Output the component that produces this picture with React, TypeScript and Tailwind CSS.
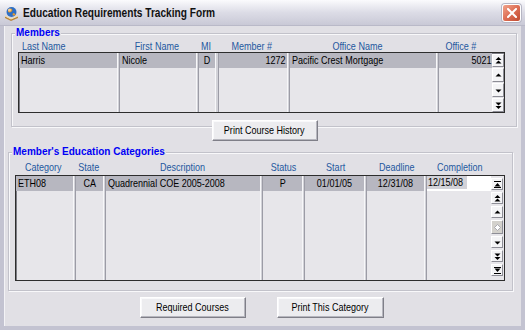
import React from 'react'

const sans = "font-['Liberation_Sans',Arial,sans-serif]"

type Align = 'left' | 'center' | 'right'
type Col = { label: string; w: number; value: string; align: Align; head?: 'left' | 'center'; sep?: number; flex?: boolean }

const memberCols: Col[] = [
  { label: 'Last Name', w: 98, value: 'Harris', align: 'left', head: 'left', sep: 3 },
  { label: 'First Name', w: 76, value: 'Nicole', align: 'left', sep: 3 },
  { label: 'MI', w: 16, value: 'D', align: 'center', sep: 4 },
  { label: 'Member #', w: 68, value: '1272', align: 'right', sep: 3 },
  { label: 'Office Name', w: 136, value: 'Pacific Crest Mortgage', align: 'left', sep: 3, flex: true },
]

const catCols: Col[] = [
  { label: 'Category', w: 57, value: 'ETH08', align: 'left', sep: 3 },
  { label: 'State', w: 27, value: 'CA', align: 'center', sep: 3 },
  { label: 'Description', w: 153, value: 'Quadrennial COE 2005-2008', align: 'left', sep: 3, flex: true },
  { label: 'Status', w: 39, value: 'P', align: 'center', sep: 3 },
  { label: 'Start', w: 59, value: '01/01/05', align: 'center', sep: 3 },
  { label: 'Deadline', w: 57, value: '12/31/08', align: 'center', sep: 3 },
]

// condensed text (the form uses a narrow face)
function Txt({ children, align = 'left' }: { children: React.ReactNode; align?: Align }) {
  const o = align === 'left' ? 'origin-left' : align === 'right' ? 'origin-right' : 'origin-center'
  return <span className={`inline-block whitespace-nowrap scale-x-[0.82] ${o}`}>{children}</span>
}

function Glyph({ kind }: { kind: string }) {
  return (
    <svg width="7" height="7" viewBox="0 0 7 7" className="block">
      {kind === 'top' && (<><rect x="0" y="0" width="7" height="1" fill="#000" /><path d="M0.5 5.5 L3.5 2 L6.5 5.5 Z" fill="#000" /><rect x="0" y="6" width="7" height="1" fill="#000" /></>)}
      {kind === 'dup' && (<><path d="M0.5 3 L3.5 0 L6.5 3 Z" fill="#000" /><path d="M0.5 6.5 L3.5 3.5 L6.5 6.5 Z" fill="#000" /></>)}
      {kind === 'up' && <path d="M0.5 4.5 L3.5 1.5 L6.5 4.5 Z" fill="#000" />}
      {kind === 'dn' && <path d="M0.5 2.5 L3.5 5.5 L6.5 2.5 Z" fill="#000" />}
      {kind === 'ddn' && (<><path d="M0.5 0.5 L3.5 3.5 L6.5 0.5 Z" fill="#000" /><path d="M0.5 4 L3.5 7 L6.5 4 Z" fill="#000" /></>)}
      {kind === 'bot' && (<><rect x="0" y="0" width="7" height="1" fill="#000" /><path d="M0.5 1.5 L3.5 5 L6.5 1.5 Z" fill="#000" /><rect x="0" y="6" width="7" height="1" fill="#000" /></>)}
      {kind === 'dia' && <path d="M3.5 0.5 L6.5 3.5 L3.5 6.5 L0.5 3.5 Z" fill="#fff" stroke="#9a9aa4" strokeWidth="0.8" />}
    </svg>
  )
}

function ScrollBtn({ kind, h }: { kind: string; h: number }) {
  const dis = kind === 'dia'
  return (
    <div
      className={`w-[12px] flex items-center justify-center border border-t-white border-l-white border-r-[#8d8d96] border-b-[#8d8d96] ${dis ? 'bg-[#d3d1cc]' : 'bg-[#f4f4f6]'}`}
      style={{ height: h }}
    >
      <Glyph kind={kind} />
    </div>
  )
}

function Sep({ w }: { w: number }) {
  return (
    <div className="flex shrink-0 self-stretch" style={{ width: w }}>
      <div className="w-px bg-[#f7f7f9]" />
      <div className="flex-1 bg-[#d2d2d8]" />
      <div className="w-px bg-[#9c9ca6]" />
    </div>
  )
}

function Cell({ c, rowH }: { c: Col; rowH: number }) {
  const al = c.align === 'left' ? 'justify-start pl-[2px]' : c.align === 'right' ? 'justify-end pr-[2px]' : 'justify-center'
  return (
    <div className={`${c.flex ? 'flex-1' : 'shrink-0'} flex flex-col`} style={c.flex ? undefined : { width: c.w }}>
      <div className={`flex items-center ${al} bg-[#b7b7c0] text-[11px] text-black`} style={{ height: rowH }}>
        <Txt align={c.align}>{c.value}</Txt>
      </div>
    </div>
  )
}

function Header({ cols, tail }: { cols: Col[]; tail: { label: string; w: number }[] }) {
  return (
    <div className={`flex h-[12px] items-center text-[11px] text-[#24589f] ${sans}`}>
      {cols.map((c, i) => (
        <React.Fragment key={i}>
          <div
            className={`${c.flex ? 'flex-1' : 'shrink-0'} flex leading-none ${c.head === 'left' ? 'justify-start pl-[4px]' : 'justify-center'}`}
            style={c.flex ? undefined : { width: c.w }}
          >
            <Txt align={c.head === 'left' ? 'left' : 'center'}>{c.label}</Txt>
          </div>
          <div className="shrink-0" style={{ width: c.sep }} />
        </React.Fragment>
      ))}
      {tail.map((t, i) => (
        <div key={i} className="shrink-0 flex justify-center leading-none" style={{ width: t.w }}>
          <Txt align="center">{t.label}</Txt>
        </div>
      ))}
    </div>
  )
}

function Button({ children, w }: { children: React.ReactNode; w: number }) {
  return (
    <div
      className={`h-[21px] flex items-center justify-center bg-[#ececef] border border-t-white border-l-white border-r-[#7f7f88] border-b-[#7f7f88] shadow-[inset_-1px_-1px_0_#b6b6be,inset_1px_1px_0_#f9f9fb] text-[11px] text-black ${sans}`}
      style={{ width: w }}
    >
      <Txt align="center">{children}</Txt>
    </div>
  )
}

function GroupBox({ label, children, className }: { label: string; children: React.ReactNode; className: string }) {
  return (
    <div className={`relative border border-[#c2c2ca] shadow-[inset_1px_1px_0_#f8f8fa,1px_1px_0_#f8f8fa] ${className}`}>
      <div className={`absolute -top-[8px] left-[3px] px-[1px] bg-[#e1e0e5] text-[10px] font-bold text-[#0000f5] leading-[14px] ${sans}`}>
        {label}
      </div>
      {children}
    </div>
  )
}

function Icon() {
  return (
    <svg width="15" height="15" viewBox="0 0 15 15">
      <path d="M1 10 L7 13 L14 10 L14 12 L7 15 L1 12 Z" fill="#b9853a" />
      <path d="M1 10 L7 13 L14 10" stroke="#f3e3b5" strokeWidth="1" fill="none" />
      <circle cx="7.5" cy="6" r="5" fill="#2f6fc4" />
      <path d="M4 3.5 Q6 2 8 3 Q9 5 7 6 Q5 7 4 5.5 Z" fill="#e89a2c" />
      <path d="M9 7 Q11 7 11.5 9 Q9.5 10 8.5 9 Z" fill="#e89a2c" />
      <circle cx="5.5" cy="4" r="1.5" fill="#ffffff" opacity="0.5" />
    </svg>
  )
}

export default function App() {
  const rowH = 15
  return (
    <div className="w-[525px] h-[330px] overflow-hidden flex flex-col bg-[#c3c3d1] select-none">
      {/* title bar */}
      <div className="h-[26px] shrink-0 flex items-center bg-gradient-to-b from-[#fbfbfd] via-[#dcdce6] to-[#c9c9d6] border-b border-[#b9b9c8]">
        <div className="ml-[4px] mr-[4px] mt-[1px]">
          <Icon />
        </div>
        <div className={`flex-1 text-[13px] font-bold text-[#111] ${sans}`}>
          <span className="inline-block whitespace-nowrap origin-left scale-x-[0.78]">Education Requirements Tracking Form</span>
        </div>
        <div className="mr-[4px] w-[19px] h-[18px] rounded-[3px] border border-white bg-gradient-to-br from-[#f0a48c] via-[#dd6e55] to-[#c04a30] flex items-center justify-center shadow-[0_0_0_1px_#b6b6c4]">
          <svg width="10" height="10" viewBox="0 0 10 10">
            <path d="M1 1 L9 9 M9 1 L1 9" stroke="#fff" strokeWidth="2" strokeLinecap="square" />
          </svg>
        </div>
      </div>

      {/* body */}
      <div className="flex-1 flex flex-col mx-[4px] mb-[4px] bg-[#e1e0e5] border-l border-[#f3f3f6]">
        {/* members */}
        <GroupBox label="Members" className="mt-[7px] ml-[6px] mr-[4px] pt-[6px] pb-[13px] pl-[6px] pr-[11px]">
          <Header cols={memberCols} tail={[{ label: 'Office #', w: 65 }, { label: '', w: 12 }]} />
          <div className={`flex h-[61px] border border-[#2d2d2d] shadow-[inset_1px_1px_0_#7c7c84] bg-[#e7e6ea] ${sans}`}>
            {memberCols.map((c, i) => (
              <React.Fragment key={i}>
                <Cell c={c} rowH={rowH} />
                <Sep w={c.sep ?? 3} />
              </React.Fragment>
            ))}
            <div className="shrink-0 w-[65px] flex">
              <div className="flex-1 flex flex-col">
                <div className="flex items-center justify-end pr-[1px] bg-[#b7b7c0] text-[11px] text-black" style={{ height: rowH }}>
                  <Txt align="right">5021</Txt>
                </div>
              </div>
              <div className="flex flex-col pt-[1px] gap-[1px]">
                <ScrollBtn kind="dup" h={13} />
                <ScrollBtn kind="up" h={14} />
                <ScrollBtn kind="dn" h={14} />
                <ScrollBtn kind="ddn" h={14} />
              </div>
            </div>
          </div>
        </GroupBox>

        <div className="flex justify-center -mt-[7px] relative">
          <div className="ml-[3px]">
            <Button w={106}>Print Course History</Button>
          </div>
        </div>

        {/* categories */}
        <GroupBox label="Member's Education Categories" className="mt-[11px] ml-[3px] mr-[8px] pt-[8px] pb-[9px] pl-[6px] pr-[7px]">
          <Header cols={catCols} tail={[{ label: 'Completion', w: 64 }, { label: '', w: 13 }]} />
          <div className={`flex h-[106px] mt-[2px] border border-[#2d2d2d] shadow-[inset_1px_1px_0_#7c7c84] bg-[#e7e6ea] ${sans}`}>
            {catCols.map((c, i) => (
              <React.Fragment key={i}>
                <Cell c={c} rowH={rowH} />
                <Sep w={c.sep ?? 3} />
              </React.Fragment>
            ))}
            <div className="shrink-0 w-[77px] flex bg-[#e7e6ea]">
              <div className="flex-1 flex flex-col">
                <div className="flex items-start bg-white text-[11px] text-black" style={{ height: rowH }}>
                  <span className="bg-[#d2d2d8] leading-[13px] px-[1px] w-[40px] overflow-visible">
                    <Txt>12/15/08</Txt>
                  </span>
                </div>
              </div>
              <div className="flex flex-col pt-[2px] gap-[2px] pr-[1px]">
                <ScrollBtn kind="top" h={12} />
                <ScrollBtn kind="dup" h={12} />
                <ScrollBtn kind="up" h={12} />
                <ScrollBtn kind="dia" h={14} />
                <ScrollBtn kind="dn" h={12} />
                <ScrollBtn kind="ddn" h={12} />
                <ScrollBtn kind="bot" h={12} />
              </div>
            </div>
          </div>
        </GroupBox>

        <div className="flex justify-center gap-[31px] mt-[6px] pr-[3px]">
          <Button w={106}>Required Courses</Button>
          <Button w={107}>Print This Category</Button>
        </div>
      </div>
    </div>
  )
}
